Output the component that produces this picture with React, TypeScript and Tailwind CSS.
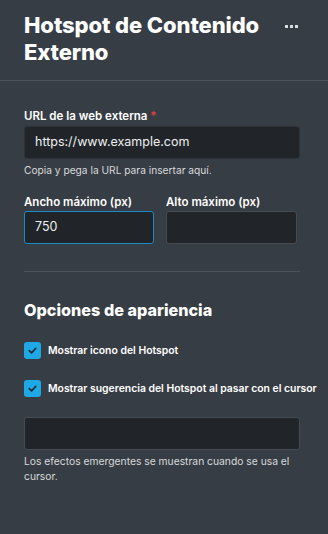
import React from "react";

function Check() {
  return (
    <div className="w-[17px] h-[17px] rounded-[3px] bg-[#1fa8e6] flex items-center justify-center shrink-0">
      <svg width="11" height="11" viewBox="0 0 12 12" fill="none">
        <path d="M2.5 6.2 L5 8.6 L9.6 3.6" stroke="#1f2a33" strokeWidth="1.8" strokeLinecap="round" strokeLinejoin="round" />
      </svg>
    </div>
  );
}

export default function App() {
  return (
    <div className="w-[328px] h-[534px] bg-[#373d44] text-white overflow-hidden" style={{ fontFamily: "Inter, 'Noto Sans', sans-serif" }}>
      <div className="flex items-start justify-between pl-6 pr-[30px] pt-[12px] pb-[14px] border-b border-[#4d535a]">
        <h1 className="text-[22px] leading-[27px] font-extrabold tracking-[-0.1px]">Hotspot de Contenido<br />Externo</h1>
        <div className="flex gap-[2px] mt-[13px]">
          <span className="w-[3px] h-[3px] bg-[#d9dcdf]" />
          <span className="w-[3px] h-[3px] bg-[#d9dcdf]" />
          <span className="w-[3px] h-[3px] bg-[#d9dcdf]" />
        </div>
      </div>
      <div className="pl-6 pr-[28px] pt-[28px]">
        <label className="block text-[11.5px] leading-[14px] font-semibold">URL de la web externa <span className="text-[#e0413f]">*</span></label>
        <div className="mt-[3px] h-[33px] rounded-[3px] bg-[#212529] border border-[#2d3237] flex items-center px-[10px] text-[12.5px] text-[#eef0f2]">https://www.example.com</div>
        <p className="mt-[4px] text-[10.2px] leading-[14px] text-[#d8dadc]">Copia y pega la URL para insertar aquí.</p>
        <div className="mt-[18px] flex gap-[12px]">
          <div className="w-[130px]">
            <label className="block text-[11.5px] leading-[14px] font-semibold whitespace-nowrap">Ancho máximo (px)</label>
            <div className="mt-[2px] h-[33px] rounded-[3px] bg-[#212529] border border-[#1b8cc2] flex items-center px-[10px] text-[12.5px] text-[#eef0f2]">750</div>
          </div>
          <div className="w-[131px]">
            <label className="block text-[11.5px] leading-[14px] font-semibold whitespace-nowrap">Alto máximo (px)</label>
            <div className="mt-[2px] h-[33px] rounded-[3px] bg-[#212529] border border-[#454b52]" />
          </div>
        </div>
        <div className="mt-[27px] h-px bg-[#4d535a]" />
        <h2 className="mt-[27px] text-[16.2px] leading-[22px] font-extrabold">Opciones de apariencia</h2>
        <div className="mt-[21px] flex items-center gap-[7px]">
          <Check />
          <span className="text-[10.4px] font-semibold">Mostrar icono del Hotspot</span>
        </div>
        <div className="mt-[21px] flex items-center gap-[7px]">
          <Check />
          <span className="text-[10.4px] font-semibold whitespace-nowrap">Mostrar sugerencia del Hotspot al pasar con el cursor</span>
        </div>
        <div className="mt-[20px] h-[33px] rounded-[3px] bg-[#212529] border border-[#454b52]" />
        <p className="mt-[4px] text-[10.3px] leading-[15px] text-[#d8dadc]">Los efectos emergentes se muestran cuando se usa el cursor.</p>
      </div>
    </div>
  );
}
